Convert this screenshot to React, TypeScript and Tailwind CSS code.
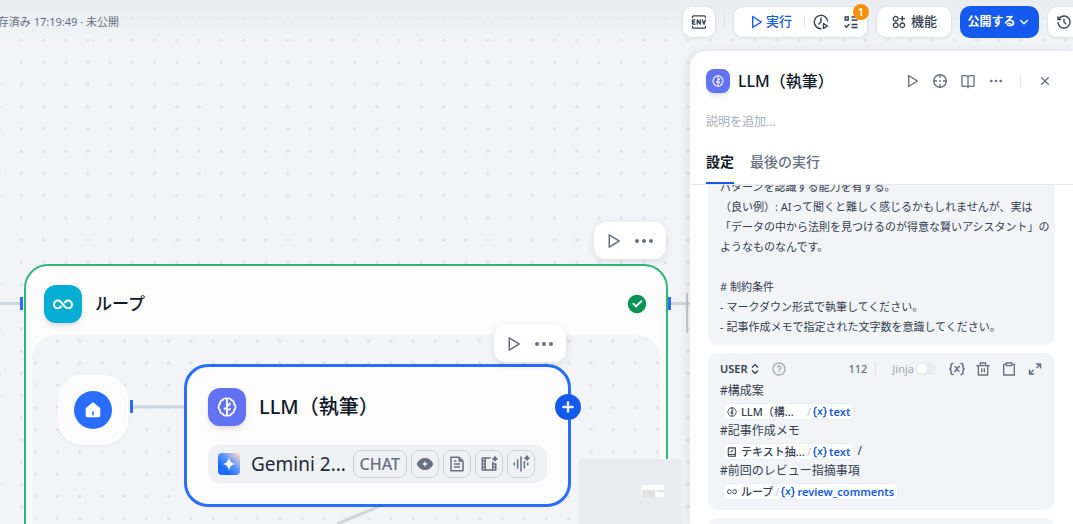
import type { ReactNode } from 'react';
import {
  RiAddLine,
  RiApps2AddLine,
  RiArrowDownSLine,
  RiBookOpenLine,
  RiCheckboxCircleFill,
  RiClipboardLine,
  RiCloseLine,
  RiDeleteBinLine,
  RiFileTextLine,
  RiFilmAiLine,
  RiHistoryLine,
  RiMoreFill,
  RiPlayLargeLine,
  RiQuestionLine,
  RiVoiceAiLine,
} from 'react-icons/ri';

const promptText = `パターンを認識する能力を有する。
（良い例）: AIって聞くと難しく感じるかもしれませんが、実は
「データの中から法則を見つけるのが得意な賢いアシスタント」の
ようなものなんです。

# 制約条件
- マークダウン形式で執筆してください。
- 記事作成メモで指定された文字数を意識してください。`;

function BrainIcon({ className }: { className: string }) {
  return (
    <svg viewBox="0 0 20 20" className={className} fill="none" stroke="currentColor" strokeWidth="1.8" strokeLinecap="round" strokeLinejoin="round" aria-hidden="true">
      <path d="M10 1.8C8.3.8 6.3 1.5 5.7 3.2 3.8 3.5 2.7 5 3 6.8 1 8.3 1 11.7 3 13.2c-.3 1.8.8 3.3 2.7 3.6.6 1.7 2.6 2.4 4.3 1.4 1.7 1 3.7.3 4.3-1.4 1.9-.3 3-1.8 2.7-3.6 2-1.5 2-4.9 0-6.4.3-1.8-.8-3.3-2.7-3.6C13.7 1.5 11.7.8 10 1.8Z" />
      <path d="M10 2v16M10 11.5H7.5M7.5 11.500v-.1M10 8.500c1.500 0 2.600-.7 2.800-2M10 13c1.400 0 2.400-.4 3-1.200" />
    </svg>
  );
}

function LoopIcon({ className }: { className: string }) {
  return (
    <svg viewBox="0 0 22 12" className={className} fill="none" stroke="currentColor" strokeWidth="2.2" strokeLinecap="round" aria-hidden="true">
      <path d="M9 8.200C8 9.600 7 10.400 5.500 10.400a4.400 4.400 0 1 1 0-8.800c4.500 0 6.500 8.800 11 8.800a4.400 4.400 0 1 0 0-8.800C15 1.600 14 2.400 13 3.800" />
    </svg>
  );
}

function EnvIcon() {
  return (
    <svg viewBox="0 0 16 16" className="size-4" fill="none" stroke="currentColor" strokeWidth="1.300" strokeLinecap="round" strokeLinejoin="round" aria-hidden="true">
      <path d="M1.500 3.500V3c0-.8.500-1.200 1.200-1.200h10.600c.7 0 1.200.4 1.200 1.200v.5M1.500 12.500v.5c0 .8.500 1.200 1.200 1.200h10.600c.7 0 1.200-.4 1.200-1.200v-.5" />
      <path d="M4 5.800H1.500v4.400H4M1.500 8h2M6.300 10.200V5.800l3 4.400V5.800M11.300 5.800l1.600 4.400 1.600-4.400" />
    </svg>
  );
}

function ClockPlayIcon() {
  return (
    <svg viewBox="0 0 16 16" className="size-4" fill="none" stroke="currentColor" strokeWidth="1.400" strokeLinecap="round" strokeLinejoin="round" aria-hidden="true">
      <path d="M14.600 7A6.700 6.700 0 1 0 8 14.700M8 4v4L5.800 10" />
      <path d="M10.500 9.500v5l4-2.500Z" />
    </svg>
  );
}

function ChecklistIcon() {
  return (
    <svg viewBox="0 0 16 16" className="size-4" fill="none" stroke="currentColor" strokeWidth="1.400" aria-hidden="true">
      <path d="M2.200 3h3v3h-3ZM8.500 3H14.500M8.500 6H14.500M8.500 10.500H14.500M8.500 13.500H14.500M1.700 11.500l1.700 1.700 3-3.100" />
    </svg>
  );
}

function TargetIcon() {
  return (
    <svg viewBox="0 0 16 16" className="size-4" fill="none" stroke="currentColor" strokeWidth="1.400" aria-hidden="true">
      <circle cx="8" cy="8" r="6.300" />
      <path d="M8 1.500V5M8 11v3.500M1.500 8H5M11 8h3.500" />
      <circle cx="8" cy="8" r=".9" fill="currentColor" stroke="none" />
    </svg>
  );
}

function ExpandIcon() {
  return (
    <svg viewBox="0 0 16 16" className="size-4" fill="none" stroke="currentColor" strokeWidth="1.500" aria-hidden="true">
      <path d="M9 3h4.500v4.500M13.500 3 9.500 7M7 13H2.500V8.500M2.500 13l4-4" />
    </svg>
  );
}

function VisionIcon() {
  return (
    <svg viewBox="0 0 18 18" className="size-[18px]" fill="currentColor" aria-hidden="true">
      <path fillRule="evenodd" d="M9 3c4 0 7 2.700 8.300 6C16 12.300 13 15 9 15S2 12.300.7 9C2 5.700 5 3 9 3Zm0 3-.9 2.100L6 9l2.100.9L9 12l.9-2.100L12 9l-2.100-.9Z" />
    </svg>
  );
}

function VariableIcon({ className }: { className: string }) {
  return (
    <svg viewBox="0 0 16 14" className={className} fill="none" stroke="currentColor" strokeWidth="1.500" strokeLinecap="round" strokeLinejoin="round" aria-hidden="true">
      <path d="M4 1.500c-1.500 0-2 .6-2 2V5c0 1-.4 1.700-1.200 2C1.600 7.300 2 8 2 9v1.500c0 1.400.5 2 2 2M12 1.500c1.500 0 2 .6 2 2V5c0 1 .4 1.700 1.200 2-.8.300-1.200 1-1.200 2v1.500c0 1.400-.5 2-2 2" />
      <path d="M5.500 9.500C7.500 9.500 8 4.500 10.500 4.500M6 4.500c1.500 0 2.500 5 4 5" />
    </svg>
  );
}

function ExtractorIcon() {
  return (
    <svg viewBox="0 0 12 12" className="size-2.5" fill="none" stroke="currentColor" strokeWidth="1.300" aria-hidden="true">
      <path d="M2.500 1h7.500v10H2.500C1.900 11 1.500 10.600 1.500 10V2c0-.6.4-1 1-1ZM1.500 9H10M4.300 6.500l3-3" />
    </svg>
  );
}

function GeminiIcon() {
  return (
    <svg viewBox="0 0 22 22" className="size-[22px] shrink-0" aria-hidden="true">
      <defs>
        <linearGradient id="gemini" x1="6" y1="16" x2="21" y2="1" gradientUnits="userSpaceOnUse">
          <stop stopColor="#1a6dff" />
          <stop offset=".45" stopColor="#5f97fb" />
          <stop offset="1" stopColor="#ffd9c9" />
        </linearGradient>
      </defs>
      <rect width="22" height="22" rx="4" fill="url(#gemini)" />
      <path d="M11 4.500c.8 4 2.500 5.700 6.500 6.500-4 .8-5.700 2.500-6.500 6.500-.8-4-2.500-5.700-6.500-6.500 4-.8 5.700-2.500 6.500-6.500Z" fill="#fff" />
    </svg>
  );
}

function DotGrid({ id, x, y }: { id: string; x: number; y: number }) {
  return (
    <svg className="absolute inset-0 size-full" aria-hidden="true">
      <defs>
        <pattern id={id} x={x} y={y} width="22.22" height="22.22" patternUnits="userSpaceOnUse">
          <circle cx="3.300" cy="3" r="1.700" fill="#e0e2e9" />
        </pattern>
      </defs>
      <rect width="100%" height="100%" fill={`url(#${id})`} />
    </svg>
  );
}

function NodeToolbar({ className }: { className: string }) {
  return (
    <div className={`absolute flex h-[37px] w-[72px] items-center justify-center gap-2.5 rounded-xl bg-white text-[#676f83] shadow-[0_2px_8px_rgba(16,24,40,0.10)] ${className}`}>
      <button type="button" aria-label="Run"><RiPlayLargeLine className="size-[18px]" /></button>
      <button type="button" aria-label="More"><RiMoreFill className="size-6" /></button>
    </div>
  );
}

function Badge({ children }: { children: ReactNode }) {
  return (
    <span className="flex h-7 min-w-7 shrink-0 items-center justify-center rounded-lg border border-[#cdd0d9] text-base font-medium text-[#676f83]">
      {children}
    </span>
  );
}

function Canvas() {
  return (
    <main className="absolute inset-0 overflow-hidden bg-[#f2f4f8]">
      <DotGrid id="dots" x={18} y={15} />
      <div className="absolute inset-x-0 top-0 h-12 bg-linear-to-b from-[#e9edf2] to-[#f2f4f8]/0" />
      <svg className="absolute top-0 left-0 h-[524px] w-[690px]" aria-hidden="true">
        <path d="M0 303.500h22M668 303.500h22" stroke="#d0d5dc" strokeWidth="3" />
        <path d="M687 293v40" stroke="#c3c6d0" strokeWidth="2" />
      </svg>

      <section className="absolute top-[264px] left-6 h-[320px] w-[644px] rounded-3xl border-2 border-[#2fb777] bg-[#fcfcfd]">
        <header className="flex h-[69px] items-center px-[18px] pt-[7px]">
          <span className="flex size-[38px] items-center justify-center rounded-xl bg-[#06aed4] text-white shadow-md shadow-black/10">
            <LoopIcon className="w-5" />
          </span>
          <h2 className="ml-[13px] flex-1 text-[17px] font-medium text-[#101828]">ループ</h2>
          <RiCheckboxCircleFill className="size-[22px] text-[#079455]" />
        </header>
        <div className="relative mx-1.5 h-60 overflow-hidden rounded-3xl bg-[#f2f4f8]">
          <DotGrid id="loop-dots" x={0} y={3} />
        </div>
      </section>

      <svg className="absolute top-0 left-0 h-[524px] w-[690px]" aria-hidden="true">
        <path d="M131 407h54M385 504l-48 20" stroke="#d0d5dc" strokeWidth="3" />
        <path d="M20 297h3v13h-3ZM668 297h3v13h-3ZM130 400h3v13h-3Z" fill="#296dff" />
      </svg>

      <div className="absolute top-[375px] left-[58px] flex size-[70px] items-center justify-center rounded-3xl border border-white bg-[#fcfcfd] shadow-xs">
        <span className="flex size-[38px] items-center justify-center rounded-full bg-[#296dff] text-white">
          <svg viewBox="0 0 16 16" className="size-4" fill="currentColor" aria-hidden="true">
            <path fillRule="evenodd" d="M7.200.8a1.200 1.200 0 0 1 1.600 0l6 5c.3.300.5.600.5 1v7c0 .8-.6 1.400-1.400 1.400H2.100c-.8 0-1.400-.6-1.400-1.400v-7c0-.4.200-.7.500-1ZM7.200 9.500v3.700h1.600V9.500Z" />
          </svg>
        </span>
      </div>

      <section className="absolute top-[364px] left-[184px] w-[387px] rounded-3xl border-3 border-[#296dff] bg-[#fcfcfd] px-[21px] pt-[21px] pb-[21px]">
        <header className="flex items-center">
          <span className="flex size-[38px] items-center justify-center rounded-xl bg-[#6172f3] text-white shadow-md shadow-black/10">
            <BrainIcon className="size-5" />
          </span>
          <h2 className="ml-[13px] text-xl font-medium text-[#101828]">LLM（執筆）</h2>
        </header>
        <div className="mt-[19px] flex h-[38px] w-[339px] items-center gap-1 rounded-xl bg-[#f0f1f5] pr-3 pl-[10px]">
          <GeminiIcon />
          <span className="ml-[7px] flex-1 text-[19px] whitespace-nowrap text-[#1d2939]">Gemini 2...</span>
          <Badge><span className="px-1.5">CHAT</span></Badge>
          <Badge><VisionIcon /></Badge>
          <Badge><RiFileTextLine className="size-[18px]" /></Badge>
          <Badge><RiFilmAiLine className="size-[18px]" /></Badge>
          <Badge><RiVoiceAiLine className="size-[18px]" /></Badge>
        </div>
      </section>
      <button type="button" aria-label="Add node" className="absolute top-[394px] left-[555px] flex size-[26px] items-center justify-center rounded-full bg-[#155aef] text-white">
        <RiAddLine className="size-[18px] stroke-current stroke-1" />
      </button>

      <NodeToolbar className="top-[222px] left-[594px]" />
      <NodeToolbar className="top-[325px] left-[494px]" />

      <div className="absolute top-[459px] left-[579px] h-[70px] w-[102px] bg-[#e9ebf0] shadow-md shadow-black/5">
        <svg viewBox="0 0 102 70" aria-hidden="true">
          <path d="M62 26h23v12H62Z" fill="#fcfcfd" />
          <path d="M63 31h13v7H63ZM78 31h7v2h-7Z" fill="#e2e2e2" />
        </svg>
      </div>
    </main>
  );
}

function Toolbar() {
  const box = 'flex h-8 shrink-0 items-center rounded-[10px] border border-[#e1e4ea] bg-white shadow-xs';
  return (
    <header className="relative flex h-[51px] shrink-0 items-start justify-between pt-1.5">
      <p className="flex h-8 w-[119px] items-center justify-end overflow-hidden text-[11px] whitespace-nowrap text-[#676f83]">
        存済み 17:19:49 · 未公開
      </p>
      <div className="-mr-2 flex items-center gap-2 text-[13px] font-medium text-[#354052]">
        <button type="button" aria-label="Environment variables" className={`${box} w-[34px] justify-center`}><EnvIcon /></button>
        <span className="h-3.5 w-px bg-[#dcdfe5]" />
        <div className={`${box} relative w-[135px]`}>
          <button type="button" className="ml-3.5 flex items-center gap-0.5 text-[#155aef]">
            <RiPlayLargeLine className="size-4" />
            実行
          </button>
          <span className="mr-2 ml-3 h-3.5 w-px bg-[#e6e8ed]" />
          <button type="button" aria-label="Run history"><ClockPlayIcon /></button>
          <button type="button" aria-label="Checklist" className="ml-3.5"><ChecklistIcon /></button>
          <span className="absolute -top-[3px] -right-0.5 flex size-4 items-center justify-center rounded-full bg-[#f79009] text-[11px] font-semibold text-white">1</span>
        </div>
        <button type="button" className={`${box} w-[76px] justify-center gap-1`}>
          <RiApps2AddLine className="size-4" />
          機能
        </button>
        <button type="button" className="flex h-8 w-[79px] shrink-0 items-center justify-center rounded-[10px] bg-[#155aef] text-xs font-bold text-white">
          公開する
          <RiArrowDownSLine className="size-4" />
        </button>
        <button type="button" aria-label="Version history" className={`${box} w-[34px] justify-center`}><RiHistoryLine className="size-4" /></button>
      </div>
    </header>
  );
}

function VariableTag({ icon, node, name, truncated = false }: { icon: ReactNode; node: string; name: string; truncated?: boolean }) {
  return (
    <span className="ml-[3px] inline-flex h-[17px] items-center rounded-[5px] border border-[#eceef2] bg-white px-[3px] align-middle text-[11px] font-medium">
      <span className="flex text-[#354052]">{icon}</span>
      <span className={`ml-1 whitespace-nowrap text-[#354052] ${truncated ? 'w-16' : ''}`}>{node}</span>
      <span className="mx-0.5 font-normal text-[#c3c8d2]">/</span>
      <VariableIcon className="w-3.5 text-[#155aef]" />
      <span className="ml-0.5 font-semibold text-[#155aef]">{name}</span>
    </span>
  );
}

function UserPrompt() {
  return (
    <section className="rounded-[10px] bg-[#f2f4f7] px-3 pt-1.5 pb-[9px]">
      <header className="flex h-5 items-center text-[#676f83]">
        <label className="relative flex items-center text-[11px] font-semibold text-[#354052]">
          <select aria-label="Role" className="w-10 appearance-none bg-transparent outline-none">
            <option>USER</option>
          </select>
          <svg viewBox="0 0 8 10" className="absolute left-[31px] h-2.5 w-2" fill="none" stroke="currentColor" strokeWidth="1.300" aria-hidden="true">
            <path d="m1 3.500 3-3 3 3M1 6.500l3 3 3-3" />
          </svg>
        </label>
        <RiQuestionLine className="ml-[11px] size-4 text-[#a3a9b5]" />
        <span className="ml-auto text-[11px] font-medium">112</span>
        <span className="mx-2 h-3.5 w-px bg-[#dcdfe5]" />
        <label className="ml-2 flex items-center gap-0.5 text-[11px] text-[#a3a9b5]">
          Jinja
          <input type="checkbox" className="h-3 w-5 appearance-none rounded-full bg-[#e9ebf0] before:m-px before:block before:size-2.5 before:rounded-full before:bg-white before:shadow-xs" />
        </label>
        <button type="button" aria-label="Insert variable" className="ml-[13px]"><VariableIcon className="w-4" /></button>
        <button type="button" aria-label="Delete" className="ml-2.5"><RiDeleteBinLine className="size-4" /></button>
        <button type="button" aria-label="Copy" className="ml-2.5"><RiClipboardLine className="size-4" /></button>
        <button type="button" aria-label="Expand" className="ml-2.5"><ExpandIcon /></button>
      </header>
      <div className="mt-0.5 text-xs text-[#354052] *:h-5 *:leading-5">
        <p>#構成案</p>
        <p><VariableTag icon={<BrainIcon className="size-2.5" />} node="LLM（構..." name="text" truncated /></p>
        <p>#記事作成メモ</p>
        <p><VariableTag icon={<ExtractorIcon />} node="テキスト抽..." name="text" truncated /> /</p>
        <p>#前回のレビュー指摘事項</p>
        <p><VariableTag icon={<LoopIcon className="w-2.5" />} node="ループ" name="review_comments" /></p>
      </div>
    </section>
  );
}

function NodePanel() {
  return (
    <aside className="relative flex min-h-0 w-[383px] flex-1 flex-col self-end overflow-hidden rounded-tl-2xl bg-white shadow-[-2px_0_12px_rgba(16,24,40,0.08)]">
      <header className="flex items-center px-4 pt-[18px] text-[#676f83]">
        <span className="flex size-6 items-center justify-center rounded-lg bg-[#6172f3] text-white shadow-md shadow-black/10">
          <BrainIcon className="size-3" />
        </span>
        <h1 className="ml-2 flex-1 text-base leading-6 font-medium text-[#101828]">LLM（執筆）</h1>
        <div className="flex items-center gap-3">
          <button type="button" aria-label="Run this step"><RiPlayLargeLine className="size-4" /></button>
          <button type="button" aria-label="Locate"><TargetIcon /></button>
          <button type="button" aria-label="Help"><RiBookOpenLine className="size-4" /></button>
          <button type="button" aria-label="More"><RiMoreFill className="size-4" /></button>
          <span className="mx-1 h-3.5 w-px bg-[#e3e5ea]" />
          <button type="button" aria-label="Close" className="mr-1"><RiCloseLine className="size-4" /></button>
        </div>
      </header>
      <input aria-label="Description" placeholder="説明を追加..." className="mx-4 mt-[18px] h-5 text-xs outline-none placeholder:text-[#a9aeb9]" />
      <div role="tablist" className="mt-[18px] flex h-9 shrink-0 gap-4 border-b border-[#e6e8ed] px-4 text-sm font-medium text-[#676f83]">
        <button type="button" role="tab" aria-selected="true" className="border-b-2 border-[#155aef] pb-2 font-semibold text-[#101828]">設定</button>
        <button type="button" role="tab" aria-selected="false" className="pb-2.5">最後の実行</button>
      </div>
      <div className="flex min-h-0 flex-1 flex-col gap-2 overflow-hidden px-[18px] *:shrink-0">
        <textarea aria-label="System prompt" rows={8} defaultValue={promptText} className="-mt-2 block resize-none overflow-hidden rounded-[10px] bg-[#f2f4f7] px-3 pb-2 text-[11px] leading-5 whitespace-pre text-[#354052] outline-none" />
        <UserPrompt />
        <section className="h-10 rounded-[10px] bg-[#f2f4f7]" />
      </div>
    </aside>
  );
}

export default function App() {
  return (
    <div lang="ja" className="relative flex h-screen flex-col overflow-hidden font-['Noto_Sans','Noto_Sans_CJK_JP',sans-serif]">
      <Canvas />
      <Toolbar />
      <NodePanel />
    </div>
  );
}
